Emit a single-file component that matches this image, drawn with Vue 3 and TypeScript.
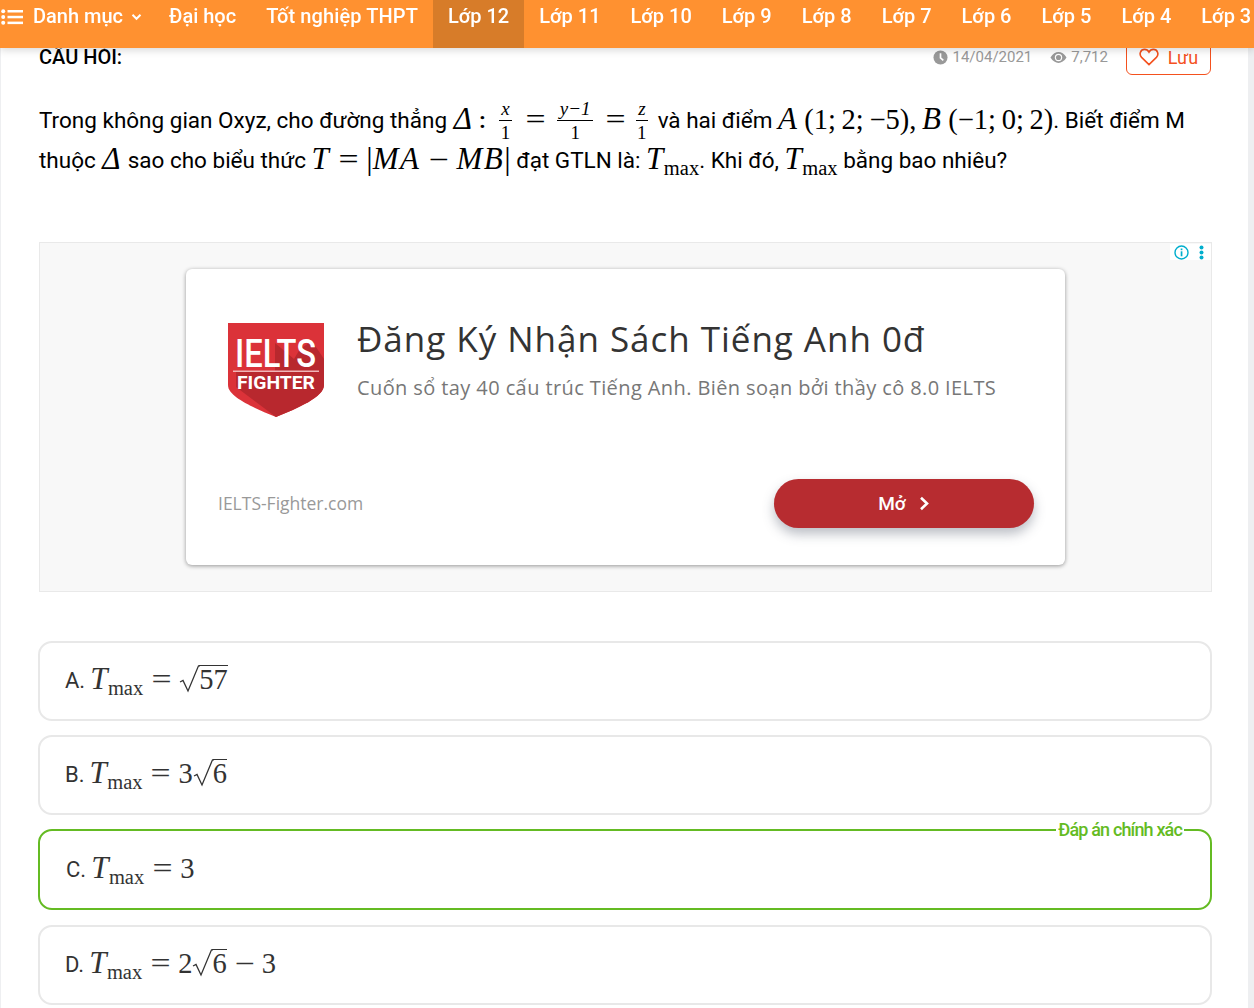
<script setup lang="ts">
const grades: string[] = ['Lớp 12', 'Lớp 11', 'Lớp 10', 'Lớp 9', 'Lớp 8', 'Lớp 7', 'Lớp 6', 'Lớp 5', 'Lớp 4', 'Lớp 3']
</script>

<template>
  <div class="page">
    <nav class="nav">
      <a class="nav-item menu">
        <svg class="list-icon" width="22" height="16" viewBox="0 0 22 16">
          <g fill="#fff">
            <circle cx="2.2" cy="2.2" r="2" /><circle cx="2.2" cy="8" r="2" /><circle cx="2.2" cy="13.8" r="2" />
            <rect x="6.5" y="1" width="15.5" height="2.5" /><rect x="6.5" y="6.8" width="15.5" height="2.5" /><rect x="6.5" y="12.6" width="15.5" height="2.5" />
          </g>
        </svg>
        <span>Danh mục</span>
        <svg class="chev" width="11" height="8" viewBox="0 0 11 8"><path d="M1.5 1.8 5.5 5.8 9.5 1.8" fill="none" stroke="#fff" stroke-width="2" /></svg>
      </a>
      <a class="nav-item">Đại học</a>
      <a class="nav-item wide-label">Tốt nghiệp THPT</a>
      <a v-for="(g, i) in grades" :key="g" class="nav-item" :class="{ active: i === 0 }">{{ g }}</a>
    </nav>

    <main class="main">
      <header class="head">
        <strong class="title">CÂU HỎI:</strong>
        <div class="meta">
          <span class="stat">
            <svg width="15" height="15" viewBox="0 0 16 16"><circle cx="8" cy="8" r="7.5" fill="#999" /><path d="M8 3.5V8.5L11 11" fill="none" stroke="#fff" stroke-width="1.8" /></svg>
            14/04/2021
          </span>
          <span class="stat">
            <svg width="17" height="13" viewBox="0 0 18 13"><path d="M0.5 6.5C3 2.5 6 .8 9 .8s6 1.7 8.5 5.7C15 10.5 12 12.2 9 12.2S3 10.5.5 6.5Z" fill="#999" /><circle cx="9" cy="6.5" r="3.9" fill="#fff" /><circle cx="9" cy="6.5" r="2.7" fill="#999" /></svg>
            7,712
          </span>
          <button class="save">
            <svg width="20" height="18" viewBox="0 0 20 18"><path d="M10 16.6 2.6 9.4C-.4 6.2 1.6 1.4 5.6 1.4 7.5 1.4 9 2.4 10 4.2 11 2.4 12.5 1.4 14.4 1.4c4 0 6 4.800 3 8Z" fill="none" stroke="#f4511e" stroke-width="1.6" /></svg>
            Lưu
          </button>
        </div>
      </header>

      <p class="question">
        Trong không gian Oxyz, cho đường thẳng <i class="m delta">Δ</i><b class="colon">:</b><span class="frac"><i>x</i><i>1</i></span><span class="up eq eq-a">=</span><span class="frac wide"><i>y−1</i><i>1</i></span><span class="up eq eq-b">=</span><span class="frac last"><i>z</i><i>1</i></span>
        và hai điểm <i class="m">A</i><span class="up">&thinsp;(1;&thinsp;2;&thinsp;−5),&thinsp;</span><i class="m">B</i><span class="up">&thinsp;(−1;&thinsp;0;&thinsp;2)</span>. Biết điểm M<br />
        thuộc <i class="m delta">Δ</i> sao cho biểu thức <i class="m">T</i><span class="up eq">=</span><span class="up bar">|</span><i class="m">MA</i><span class="up eq">−</span><i class="m">MB</i><span class="up bar">|</span> đạt GTLN là: <i class="m">T</i><sub class="max">max</sub>. Khi đó, <i class="m">T</i><sub class="max">max</sub> bằng bao nhiêu?
      </p>

      <section class="ad">
        <div class="ad-icons">
          <svg width="15" height="15" viewBox="0 0 15 15"><circle cx="7.5" cy="7.5" r="6.5" fill="none" stroke="#00aecd" stroke-width="1.4" /><rect x="6.7" y="6.3" width="1.7" height="5" fill="#00aecd" /><rect x="6.7" y="3.5" width="1.7" height="1.7" fill="#00aecd" /></svg>
          <svg width="5" height="15" viewBox="0 0 5 15"><g fill="#00aecd"><circle cx="2.5" cy="2.5" r="2" /><circle cx="2.5" cy="7.5" r="2" /><circle cx="2.5" cy="12.5" r="2" /></g></svg>
        </div>
        <div class="ad-card">
          <div class="ad-top">
            <svg class="logo" width="96" height="94" viewBox="0 0 96 94">
              <path d="M0 0H96V62C96 74 70 85 48 94 26 85 0 74 0 62Z" fill="#db3239" />
              <path d="M8 64 48 94C70 85 96 74 96 62V36L84 18 72 26 66 36 47 20V48L8 49Z" fill="#b8282e" />
              <text x="7" y="44" textLength="81" lengthAdjust="spacingAndGlyphs" class="logo-big">IELTS</text>
              <rect x="5" y="47.500" width="86" height="1.500" fill="#f0b5b7" />
              <text x="9" y="66" textLength="78" lengthAdjust="spacingAndGlyphs" class="logo-small">FIGHTER</text>
            </svg>
            <div class="ad-copy">
              <h2 class="ad-title">Đăng Ký Nhận Sách Tiếng Anh 0đ</h2>
              <p class="ad-sub">Cuốn sổ tay 40 cấu trúc Tiếng Anh. Biên soạn bởi thầy cô 8.0 IELTS</p>
            </div>
          </div>
          <div class="ad-bottom">
            <span class="ad-site">IELTS-Fighter.com</span>
            <button class="ad-btn">
              Mở
              <svg width="11" height="15" viewBox="0 0 11 15"><path d="M2 1.800 8 7.500 2 13.200" fill="none" stroke="#fff" stroke-width="2.600" /></svg>
            </button>
          </div>
        </div>
      </section>

      <div class="options">
        <div class="option">
          <span class="line">
            <span class="opt-label">A.</span>
            <i class="m">T</i><sub class="max">max</sub><span class="up eq">=</span><span class="sqrt"><svg width="21" height="28" viewBox="0 0 21 28"><path d="M1 17 4 15.500 9 26 19.500 .8H21" fill="none" stroke="#333" stroke-width="1.300" /></svg><span class="rad up">57</span></span>
          </span>
        </div>
        <div class="option">
          <span class="line">
            <span class="opt-label">B.</span>
            <i class="m">T</i><sub class="max">max</sub><span class="up eq">=</span><span class="up">3</span><span class="sqrt"><svg width="21" height="28" viewBox="0 0 21 28"><path d="M1 17 4 15.500 9 26 19.500 .8H21" fill="none" stroke="#333" stroke-width="1.300" /></svg><span class="rad up">6</span></span>
          </span>
        </div>
        <div class="option correct">
          <span class="line">
            <span class="opt-label">C.</span>
            <i class="m">T</i><sub class="max">max</sub><span class="up eq">=</span><span class="up">3</span>
          </span>
          <span class="badge">Đáp án chính xác</span>
        </div>
        <div class="option">
          <span class="line">
            <span class="opt-label">D.</span>
            <i class="m">T</i><sub class="max">max</sub><span class="up eq">=</span><span class="up">2</span><span class="sqrt"><svg width="21" height="28" viewBox="0 0 21 28"><path d="M1 17 4 15.500 9 26 19.500 .8H21" fill="none" stroke="#333" stroke-width="1.300" /></svg><span class="rad up">6</span></span><span class="up eq minus">−</span><span class="up">3</span>
          </span>
        </div>
      </div>
    </main>
  </div>
</template>

<style>
html, body { margin: 0; background: #eeeff1; overflow: hidden; }
</style>

<style scoped>
.page { width: 1254px; height: 1008px; overflow: hidden; font-family: Roboto, "Liberation Sans", sans-serif; }

.nav {
  position: fixed; top: 0; left: 0; right: 0; height: 48px; z-index: 5;
  display: flex; align-items: flex-start; background: #ff9130; white-space: nowrap; overflow: hidden;
  box-shadow: 0 2px 8px rgba(0, 0, 0, .16);
}
.nav-item { flex: none; padding: 0 15px; height: 48px; line-height: 33px; font-size: 20px; font-weight: 500; color: #fff; }
.nav-item.active { background: #d77c29; }
.wide-label { letter-spacing: .1px; }
.menu { display: flex; align-items: center; height: 33px; padding: 0 12px 0 0; }
.list-icon { margin: 0 10px 0 1px; }
.chev { margin-left: 8px; }

.main { width: 1247px; height: 1008px; margin-left: 1px; background: #fff; box-sizing: border-box; padding: 41px 37px 0 37px; }
.head { display: flex; justify-content: space-between; align-items: flex-start; padding-left: 1px; }
.title { font-size: 20px; line-height: 32px; font-weight: 500; color: #000; }
.meta { display: flex; align-items: flex-start; color: #999; font-size: 15px; }
.stat { display: flex; align-items: center; gap: 4px; height: 32px; margin-right: 18px; }
.save {
  display: flex; align-items: center; justify-content: center; gap: 9px; width: 85px; height: 34px; padding: 0 0 2px;
  box-sizing: border-box; border: 1px solid #f4511e; border-radius: 6px; background: #fff; color: #f4511e;
  font: 18px Roboto, sans-serif;
}

.question { margin: 26px 0 0 1px; font-size: 22.500px; line-height: 39.500px; color: #000; white-space: nowrap; }
.m { font-family: "Liberation Serif", serif; font-size: 31px; line-height: 0; font-style: italic; letter-spacing: 1.500px; vertical-align: -1px; }
.delta { margin-left: 1px; }
.up { font-family: "Liberation Serif", serif; font-size: 28.500px; line-height: 0; font-style: normal; vertical-align: -1px; }
.eq { display: inline-block; width: 21px; margin: 0 7.500px; text-align: center; transform: scaleX(1.250); }
.eq-a { margin: 0 11.500px 0 12.500px; }
.eq-b { margin: 0 10px 0 11.500px; }
.minus { margin: 0 7px; }
.colon { font-weight: 700; margin: 0 13px 0 6px; line-height: 0; }
.bar { font-size: 32px; }
.max { font-family: "Liberation Serif", serif; font-size: 20.500px; line-height: 0; vertical-align: -7px; margin-left: -1px; }
.frac {
  display: inline-flex; flex-direction: column; align-items: center; vertical-align: 13px; margin: -18px 0;
  font-family: "Liberation Serif", serif; font-size: 19px; line-height: 19px;
}
.frac.last { margin-right: 4px; }
.frac i { font-style: italic; display: block; padding: 0 2.500px 2px; }
.frac i + i { font-style: normal; border-top: 1px solid #000; align-self: stretch; text-align: center; padding: 2px 0 0; }
.frac.wide { min-width: 36px; }

.ad {
  position: relative; margin: 62px 0 0 1px; width: 1173px; height: 350px; box-sizing: border-box; padding: 26px 146px;
  background: #f8f8f8; border: 1px solid #e9e9e9;
}
.ad-icons { position: absolute; top: 1px; right: 0; padding: 1px 7px 0 4px; display: flex; gap: 10px; align-items: center; background: #fff; }
.ad-card {
  height: 296px; box-sizing: border-box; padding: 54px 31px 37px 32px; background: #fff; border-radius: 6px;
  box-shadow: 0 1px 4px rgba(0, 0, 0, .4); display: flex; flex-direction: column; justify-content: space-between;
}
.ad-top { display: flex; padding-left: 10px; gap: 33px; }
.logo { flex: none; }
.logo-big { font-family: Roboto, sans-serif; font-size: 38px; font-weight: 500; fill: #fff; }
.logo-small { font-family: Roboto, sans-serif; font-size: 19px; font-weight: 700; fill: #fff; }
.ad-copy { font-family: "Open Sans", sans-serif; }
.ad-title { margin: -6px 0 0; font-size: 35px; line-height: 44px; font-weight: 400; color: #333; letter-spacing: .97px; white-space: nowrap; }
.ad-sub { margin: 14px 0 0; font-size: 20px; line-height: 26px; color: #777; letter-spacing: .4px; white-space: nowrap; }
.ad-bottom { display: flex; justify-content: space-between; align-items: center; }
.ad-site { font-family: "Open Sans", sans-serif; font-size: 17.500px; color: #999; margin-top: -2px; }
.ad-btn {
  display: flex; align-items: center; justify-content: center; gap: 13px; width: 260px; height: 49px; padding: 0; border: 0; border-radius: 25px;
  background: #b72c30; color: #fff; font: 500 19px Roboto, sans-serif;
  box-shadow: 0 6px 12px rgba(60, 70, 90, .35);
}

.options { margin: 49px -1px 0 0; display: flex; flex-direction: column; gap: 14.500px; }
.option {
  position: relative; height: 79.500px; box-sizing: border-box; padding: 0 0 0 25px; border: 2px solid #e8e8e8; border-radius: 14px;
  display: flex; align-items: center; color: #333; white-space: nowrap;
}
.option:last-child { height: 80.500px; }
.line { font-size: 22px; line-height: 30px; }
.option .m, .option .max, .option .up { color: #333; }
.opt-label { margin-right: 5px; }
.correct { height: 81px; border-color: #64bb23; padding-left: 26px; }
.badge {
  position: absolute; top: -11px; right: 26px; padding: 0 2px; background: #fff; color: #64bb23;
  font-size: 18px; line-height: 20px; font-weight: 500; letter-spacing: -.85px;
}
.sqrt { display: inline-flex; align-items: flex-start; vertical-align: -5px; margin: -6px 0; }
.rad { border-top: 1.500px solid #333; line-height: 28px; margin-left: -1px; vertical-align: baseline; }
</style>
